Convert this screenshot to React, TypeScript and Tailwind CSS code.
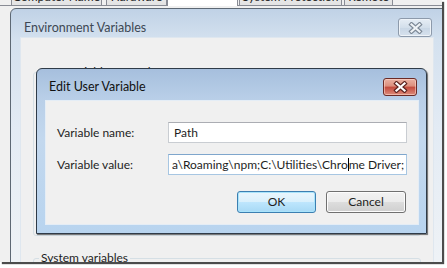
const CloseGlyph = ({ outline, fill }: { outline: string; fill: string }) => (
  <svg width="15" height="12" viewBox="0 0 15 12">
    <path d="M3.5 2.5 L11.5 9.5 M11.5 2.5 L3.5 9.5" stroke={outline} strokeWidth="4.4" strokeLinecap="square" fill="none" />
    <path d="M3.5 2.5 L11.5 9.5 M11.5 2.5 L3.5 9.5" stroke={fill} strokeWidth="2.2" strokeLinecap="square" fill="none" />
  </svg>
);

const TabStrip = () => (
  <div className="flex h-[6px] items-end border-b border-[#898c95] pl-[11px]">
    <div className="flex h-[20px] w-[91px] items-end justify-center border border-b-0 border-[#898c95] bg-[linear-gradient(180deg,#f2f2f2,#e3e3e3)] pb-px leading-[14px]">
      Computer Name
    </div>
    <div className="ml-[4px] flex h-[20px] w-[61px] items-end justify-center border border-b-0 border-[#898c95] bg-[linear-gradient(180deg,#f2f2f2,#e3e3e3)] pb-px leading-[14px]">
      Hardware
    </div>
    <div className="-mb-px flex h-[30px] w-[71px] items-end justify-center border border-b-0 border-[#898c95] bg-white pb-[14px] leading-[14px]">
      Advanced
    </div>
    <div className="ml-px flex h-[20px] w-[103px] items-end justify-center border border-b-0 border-[#898c95] bg-[linear-gradient(180deg,#f2f2f2,#e3e3e3)] pb-px leading-[14px]">
      System Protection
    </div>
    <div className="ml-[2px] flex h-[20px] w-[49px] items-end justify-center border border-b-0 border-[#898c95] bg-[linear-gradient(180deg,#f2f2f2,#e3e3e3)] pb-px leading-[14px]">
      Remote
    </div>
  </div>
);

const OuterWindow = () => (
  <div className="ml-[10px] mt-[2px] flex h-[270px] w-[440px] flex-col rounded-t-[6px] border border-[#5d6874] bg-[linear-gradient(180deg,#c0d2e6_0px,#d4e1ef_31px,#e3ebf4_120px,#eef2f6_250px)]">
    <div className="flex h-[31px] w-[421px] items-start justify-between pl-[13px] pt-[9px]">
      <span className="text-[12.5px] leading-[19px] text-[#3d4854]">Environment Variables</span>
      <button className="flex h-[19px] w-[34px] items-center justify-center rounded-[3px] border border-[#8d9aab] bg-[linear-gradient(180deg,#e6edf5,#d3dfeb_50%,#c8d6e5_51%,#d6e1ed)] shadow-[inset_0_0_0_1px_#eef3f8]">
        <CloseGlyph outline="#7c8896" fill="#eef2f6" />
      </button>
    </div>
    <div className="ml-[9px] w-[414px] flex-1 border border-[#dfe7ef] bg-[#f0f0f0]">
      <fieldset className="mx-[12px] mt-[27px] h-[171px] rounded-[3px] border border-[#d5dfe5]">
        <legend className="ml-[5px] px-[2px] leading-[14px]">User variables for Sal</legend>
      </fieldset>
      <fieldset className="mx-[12px] mt-[15px] h-[60px] rounded-[3px] border border-[#d5dfe5]">
        <legend className="ml-[5px] px-[2px] leading-[14px]">System variables</legend>
      </fieldset>
    </div>
  </div>
);

const EditDialog = () => (
  <div className="absolute left-[36px] top-[68px] flex h-[166px] w-[391px] flex-col rounded-t-[6px] border border-[#2f3b48] bg-[linear-gradient(180deg,#a6bfdd_0px,#b9cfe8_30px,#c3d8ee_70px,#b8d4ef_166px)] shadow-[1px_1px_1px_rgba(0,0,0,0.55)]">
    <div className="flex h-[31px] items-start justify-between pl-[12px] pr-[9px] pt-[9px]">
      <span className="text-[12.5px] leading-[18px] text-[#111]">Edit User Variable</span>
      <button className="flex h-[18px] w-[34px] items-center justify-center rounded-[3px] border border-[#6b2b26] bg-[linear-gradient(180deg,#eab1a2,#dc8e7c_45%,#c24b3d_50%,#c9584a_62%,#dc8c7a)] shadow-[inset_0_0_0_1px_rgba(255,220,210,0.55)]">
        <CloseGlyph outline="#5b231f" fill="#ffffff" />
      </button>
    </div>
    <div className="ml-[8px] flex h-[125px] w-[374px] flex-col border border-[#e4edf6] bg-[#f0f0f0]">
      <div className="mt-[21px] flex h-[21px] items-center">
        <span className="w-[122px] pl-[11px]">Variable name:</span>
        <div className="flex h-[21px] w-[239px] items-center border border-[#c9cdd2] border-t-[#abadb3] bg-white pl-[5px]">
          Path
        </div>
      </div>
      <div className="mt-[11px] flex h-[21px] items-center">
        <span className="w-[122px] pl-[11px]">Variable value:</span>
        <div className="flex h-[21px] w-[239px] items-center overflow-hidden whitespace-nowrap border border-[#a7c6e2] border-t-[#7fa6cc] bg-white pl-[3px]">
          {"a\\Roaming\\npm;C:\\Utilities\\Chro"}
          <span className="inline-block h-[13px] w-px bg-black" />
          {"me Driver;"}
        </div>
      </div>
      <div className="mt-[16px] flex justify-end gap-[10px] pr-[12px]">
        <button className="h-[22px] w-[79px] rounded-[3px] border border-[#3c7fb1] bg-[linear-gradient(180deg,#eaf6fd,#d9f0fc_50%,#bee6fd_51%,#a7d9f5)] leading-[14px] shadow-[inset_0_0_0_1px_#a9e4fb]">
          OK
        </button>
        <button className="h-[22px] w-[80px] rounded-[3px] border border-[#707070] bg-[linear-gradient(180deg,#f2f2f2,#ebebeb_50%,#dddddd_51%,#cfcfcf)] leading-[14px] shadow-[inset_0_0_0_1px_#fcfcfc]">
          Cancel
        </button>
      </div>
    </div>
  </div>
);

export default function App() {
  return (
    <div className="h-[268px] w-[447px] bg-white font-['Lato',sans-serif] text-[12px] text-[#1e1e1e]">
      <div className="relative h-[262px] w-[442px] overflow-hidden bg-[#f0f0f0] shadow-[2px_2px_1px_rgba(0,0,0,0.7)]">
        <TabStrip />
        <OuterWindow />
        <EditDialog />
      </div>
    </div>
  );
}
